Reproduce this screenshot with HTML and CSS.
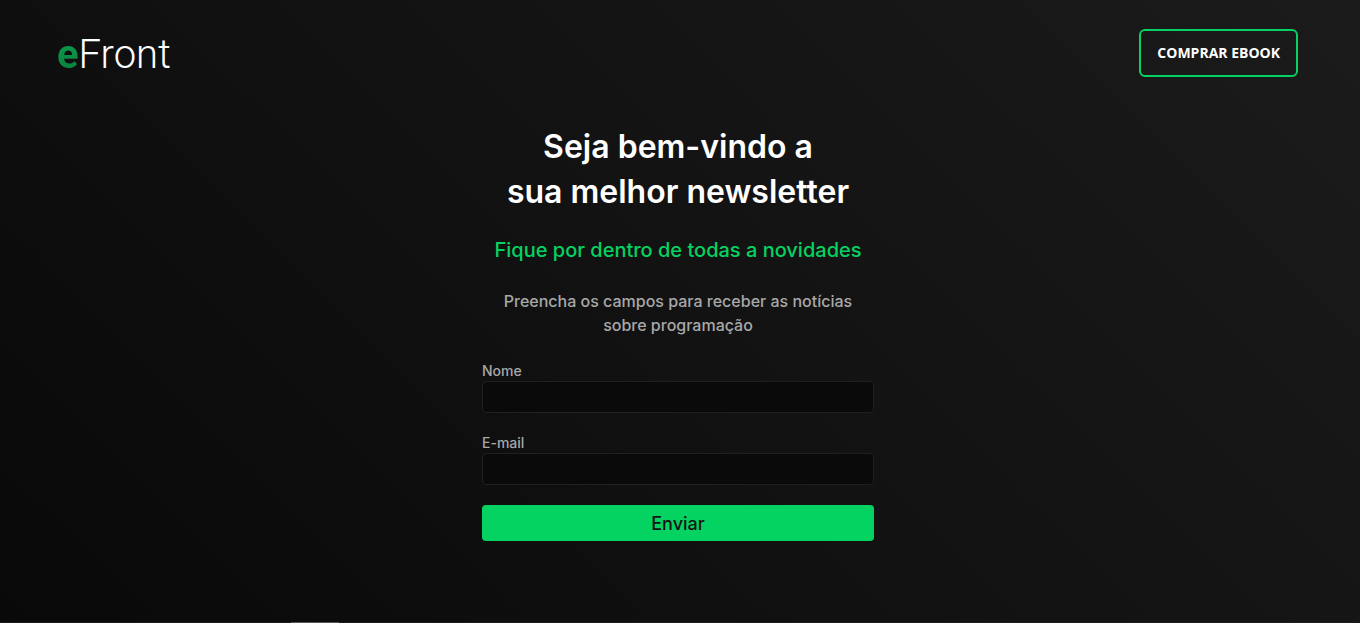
FILE: index.html
```html
<!DOCTYPE html>
<html lang="pt-BR">
<head>
  <meta charset="utf-8">
  <meta name="viewport" content="width=device-width, initial-scale=1">
  <title>eFront</title>
  <link rel="stylesheet" href="styles.css">
</head>
<body class="page">
  <header class="header">
    <a class="logo" href="#"><span class="logo-mark">e</span>Front</a>
    <a class="ebook" href="#">COMPRAR EBOOK</a>
  </header>
  <main class="main">
    <h1 class="title">Seja bem-vindo a<br>sua melhor newsletter</h1>
    <h2 class="subtitle">Fique por dentro de todas a novidades</h2>
    <p class="intro">Preencha os campos para receber as notícias sobre programação</p>
    <form class="form">
      <div class="field">
        <label class="label" for="nome">Nome</label>
        <input class="input" id="nome" name="nome" type="text">
      </div>
      <div class="field">
        <label class="label" for="email">E-mail</label>
        <input class="input" id="email" name="email" type="email">
      </div>
      <button class="submit" type="submit">Enviar</button>
    </form>
  </main>
  <footer class="edge"><div class="edge-tab"></div></footer>
</body>
</html>
```
FILE: styles.css
```css
* {
  box-sizing: border-box;
}

.page {
  display: flex;
  flex-direction: column;
  min-height: 100vh;
  margin: 0;
  padding-right: 4px;
  background: linear-gradient(45deg, #090909, #121212 50%, #1b1b1b);
  color: #fff;
  font-family: Inter, "Liberation Sans", sans-serif;
}

.header {
  display: flex;
  align-items: center;
  justify-content: space-between;
  padding: 29px 58px 0 57px;
}

.logo {
  padding-top: 4px;
  color: #fff;
  font-family: Roboto, sans-serif;
  font-size: 40px;
  font-weight: 300;
  line-height: 44px;
  text-decoration: none;
}

.logo-mark {
  background: linear-gradient(#0fa352, #0a7a3a);
  background-clip: text;
  -webkit-background-clip: text;
  color: transparent;
  font-weight: 700;
}

.ebook {
  padding: 12px 16px;
  border: 2px solid #04d361;
  border-radius: 6px;
  color: #fff;
  font-family: "Open Sans", "Noto Sans", sans-serif;
  font-size: 14px;
  font-weight: 700;
  line-height: 20px;
  text-decoration: none;
}

.main {
  display: flex;
  flex: 1;
  flex-direction: column;
  align-items: center;
  width: 100%;
  max-width: 392px;
  margin: 0 auto;
  padding-top: 47px;
}

.title {
  margin: 0;
  font-size: 32px;
  font-weight: 600;
  line-height: 45px;
  text-align: center;
  white-space: nowrap;
}

.subtitle {
  margin: 21px 0 0;
  color: #04d361;
  font-size: 20px;
  font-weight: 500;
  line-height: 30px;
  text-align: center;
}

.intro {
  margin: 24px 0 0;
  padding: 0 16px;
  color: #a8a8a8;
  font-size: 16px;
  font-weight: 500;
  line-height: 24px;
  text-align: center;
}

.form {
  display: flex;
  flex-direction: column;
  gap: 20px;
  width: 100%;
  margin-top: 24px;
}

.field {
  display: flex;
  flex-direction: column;
}

.label {
  color: #a8a8a8;
  font-size: 14px;
  font-weight: 500;
  line-height: 20px;
}

.input {
  width: 100%;
  height: 32px;
  padding: 0 8px;
  border: 1px solid #202024;
  border-radius: 4px;
  background: #0a0a0a;
  color: #fff;
  font: inherit;
}

.submit {
  height: 36px;
  border: 0;
  border-radius: 4px;
  background: #04d361;
  color: #121214;
  font-family: inherit;
  font-size: 18px;
  font-weight: 500;
}

.edge {
  padding-left: 291px;
  background: #1c1a22;
}

.edge-tab {
  width: 48px;
  height: 1px;
  background: #555;
}
```
